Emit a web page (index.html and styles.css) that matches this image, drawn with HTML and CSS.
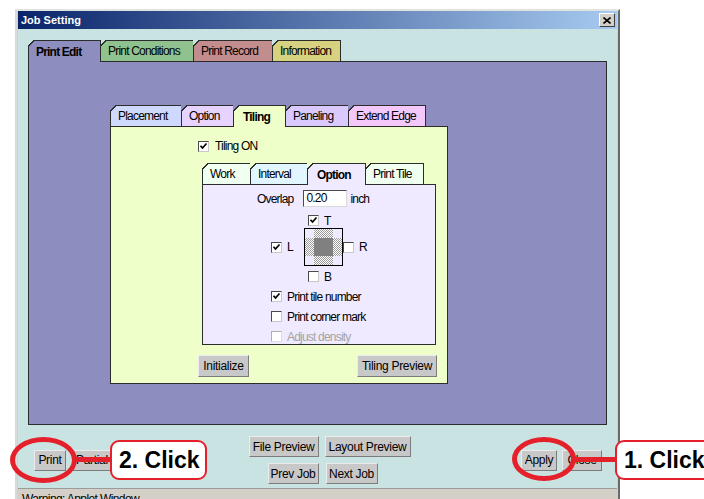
FILE: index.html
```html
<!DOCTYPE html>
<html lang="en">

<head>
    <meta charset="UTF-8">
    <title>Job Setting</title>
    <link rel="stylesheet" href="styles.css">
</head>

<body>
    <div class="window">
        <div class="titlebar">
            <span class="title">Job Setting</span>
            <span class="close-btn">
                <svg width="8" height="7" viewBox="0 0 8 7"><path d="M0.5 0.5l7 6M7.5 0.5l-7 6" stroke="#000" stroke-width="1.6"/></svg>
            </span>
        </div>

        <div class="content">
            <div class="tabs">
                <div class="tab on t-edit">Print Edit</div>
                <div class="tab t-cond">Print Conditions</div>
                <div class="tab t-rec">Print Record</div>
                <div class="tab t-info">Information</div>
            </div>

            <div class="panel main-panel">
                <div class="tabs">
                    <div class="tab t-place">Placement</div>
                    <div class="tab t-opt">Option</div>
                    <div class="tab on t-tiling">Tiling</div>
                    <div class="tab t-paneling">Paneling</div>
                    <div class="tab t-edge">Extend Edge</div>
                </div>

                <div class="panel tiling-panel">
                    <div class="check-row tiling-on"><span class="cb"><svg viewBox="0 0 9 9"><path d="M1.5 3.8l2 2.2 4-4.5" stroke="#000" stroke-width="1.7" fill="none"/></svg></span>Tiling ON</div>

                    <div class="sub-pane">
                        <div class="tabs">
                            <div class="tab t-work">Work</div>
                            <div class="tab t-interval">Interval</div>
                            <div class="tab on t-suboption">Option</div>
                            <div class="tab t-printtile">Print Tile</div>
                        </div>

                        <div class="panel option-panel">
                            <div class="overlap-row">
                                <span>Overlap</span>
                                <span class="field">0.20</span>
                                <span class="unit">inch</span>
                            </div>

                            <div class="check-row edge-tb"><span class="cb"><svg viewBox="0 0 9 9"><path d="M1.5 3.8l2 2.2 4-4.5" stroke="#000" stroke-width="1.7" fill="none"/></svg></span>T</div>

                            <div class="edge-mid">
                                <div class="check-row edge-l"><span class="cb"><svg viewBox="0 0 9 9"><path d="M1.5 3.8l2 2.2 4-4.5" stroke="#000" stroke-width="1.7" fill="none"/></svg></span>L</div>
                                <svg class="edge-box" width="39" height="38" viewBox="0 0 39 38">
                                    <defs>
                                        <pattern id="chk" width="2" height="2" patternUnits="userSpaceOnUse">
                                            <rect width="2" height="2" fill="#fff"/>
                                            <rect width="1" height="1" fill="#9a9a9a"/>
                                            <rect x="1" y="1" width="1" height="1" fill="#9a9a9a"/>
                                        </pattern>
                                    </defs>
                                    <rect x="0.5" y="0.5" width="38" height="37" fill="#efeaff" stroke="#000"/>
                                    <rect x="10" y="1" width="19" height="36" fill="url(#chk)"/>
                                    <rect x="1" y="10" width="37" height="18" fill="url(#chk)"/>
                                    <rect x="10" y="10" width="19" height="18" fill="#808080"/>
                                </svg>
                                <div class="check-row"><span class="cb"></span>R</div>
                            </div>

                            <div class="check-row edge-tb edge-b"><span class="cb"></span>B</div>

                            <div class="opt-list">
                                <div class="check-row"><span class="cb"><svg viewBox="0 0 9 9"><path d="M1.5 3.8l2 2.2 4-4.5" stroke="#000" stroke-width="1.7" fill="none"/></svg></span>Print tile number</div>
                                <div class="check-row"><span class="cb"></span>Print corner mark</div>
                                <div class="check-row disabled"><span class="cb"></span>Adjust density</div>
                            </div>
                        </div>
                    </div>

                    <div class="pane-buttons">
                        <button class="btn b-init">Initialize</button>
                        <button class="btn b-tprev">Tiling Preview</button>
                    </div>
                </div>
            </div>

            <div class="actions">
                <div class="group">
                    <button class="btn b-print">Print</button>
                    <button class="btn b-partial">Partial Print</button>
                </div>
                <div class="stack">
                    <div class="group">
                        <button class="btn b-fprev">File Preview</button>
                        <button class="btn b-lprev">Layout Preview</button>
                    </div>
                    <div class="group jobs">
                        <button class="btn b-prev">Prev Job</button>
                        <button class="btn b-next">Next Job</button>
                    </div>
                </div>
                <div class="group end">
                    <button class="btn b-apply">Apply</button>
                    <button class="btn b-close">Close</button>
                </div>
            </div>
        </div>

        <div class="status">Warning: Applet Window</div>
    </div>

    <!-- instruction marks over the window -->
    <div class="ring ring-print"></div>
    <div class="leader leader-print"></div>
    <div class="callout callout-print">2. Click</div>

    <div class="ring ring-apply"></div>
    <div class="leader leader-apply"></div>
    <div class="callout callout-apply">1. Click</div>
</body>

</html>
```

FILE: styles.css
```css
body {
    margin: 0;
    height: 499px;
    overflow: hidden;
    position: relative;
    background-color: #fff;
    font-family: "Liberation Sans", Arial, sans-serif;
    font-size: 12px;
    letter-spacing: -0.8px;
    color: #000;
}

.window {
    margin: 9px 0 0 15px;
    width: 605px;
    box-sizing: border-box;
    border: 2px solid;
    border-color: #e2e2e2 #6a6a6a #6a6a6a #dadada;
    border-bottom: 0;
    padding: 0 1px;
    background-color: #d4d0c8;
}

.titlebar {
    height: 18px;
    display: flex;
    align-items: center;
    justify-content: space-between;
    padding: 0 2px 0 3px;
    background: linear-gradient(to right, #0a246a, #a6caf0);
    color: #fff;
    font: bold 11px "Liberation Sans", Arial, sans-serif;
    letter-spacing: 0;
}

.close-btn {
    width: 16px;
    height: 14px;
    box-sizing: border-box;
    display: flex;
    align-items: center;
    justify-content: center;
    background-color: #d4d0c8;
    border: 1px solid;
    border-color: #fff #404040 #404040 #fff;
}

.content {
    background-color: #c9e3e2;
    padding: 11px 10px 0 10px;
}

/* tabs */
.tabs {
    display: flex;
    align-items: flex-end;
    height: 21px;
}

.tab {
    height: 21px;
    box-sizing: border-box;
    border: 1px solid #2c2c2c;
    border-bottom: 0;
    margin-right: -1px;
    padding: 0 0 0 7px;
    display: flex;
    align-items: center;
    position: relative;
    background-color: var(--c);
    white-space: nowrap;
}

.tab::before {
    content: "";
    position: absolute;
    top: -1px;
    left: -1px;
    width: 6px;
    height: 6px;
    background: linear-gradient(135deg, var(--under) 48%, #2c2c2c 48%, #2c2c2c 62%, transparent 62%);
}

.tab.on {
    height: 22px;
    margin-bottom: -1px;
    z-index: 1;
    font-weight: bold;
}

.panel {
    border: 1px solid #2c2c2c;
    box-sizing: border-box;
}

/* main tabs */
.t-edit { --c: #8d8ebf; --under: #c9e3e2; width: 73px; }
.t-cond { --c: #8fc28f; --under: #c9e3e2; width: 94px; }
.t-rec { --c: #c48d8d; --under: #c9e3e2; width: 80px; }
.t-info { --c: #d7d27f; --under: #c9e3e2; width: 69px; }

.main-panel {
    height: 364px;
    background-color: #8d8ebf;
    padding: 43px 0 0 81px;
}

/* placement / option / tiling ... */
.main-panel .tab { --under: #8d8ebf; }
.t-place { --c: #cfd9ff; width: 72px; }
.t-opt { --c: #e6d3ff; width: 53px; }
.t-tiling { --c: #efffca; width: 53px; padding-left: 9px; }
.t-paneling { --c: #d9c9ff; width: 64px; }
.t-edge { --c: #f4c8fb; width: 78px; }

.tiling-panel {
    width: 338px;
    height: 258px;
    background-color: #efffca;
    padding: 13px 10px 0 87px;
}

.check-row {
    display: flex;
    align-items: center;
    gap: 5px;
    height: 11px;
    white-space: nowrap;
}

.cb {
    width: 11px;
    height: 11px;
    box-sizing: border-box;
    border: 1px solid;
    border-color: #4a4a4a #c8c8c8 #c8c8c8 #4a4a4a;
    background-color: #fff;
    display: flex;
    align-items: center;
    justify-content: center;
    flex-shrink: 0;
}

.cb svg {
    width: 9px;
    height: 9px;
}

.tiling-on {
    height: 12px;
    gap: 6px;
}

.sub-pane {
    margin: 11px 0 0 4px;
    width: 234px;
}

/* work / interval / option / print tile */
.sub-pane .tab { --under: #efffca; }
.t-work { --c: #effff0; width: 49px; }
.t-interval { --c: #e2f6ff; width: 58px; }
.t-suboption { --c: #efeaff; width: 59px; padding-left: 9px; }
.t-printtile { --c: #effff0; width: 59px; }

.option-panel {
    height: 161px;
    background-color: #efeaff;
    padding-top: 5px;
}

.overlap-row {
    display: flex;
    align-items: center;
    height: 17px;
    padding-left: 54px;
}

.field {
    width: 44px;
    height: 17px;
    box-sizing: border-box;
    margin-left: 10px;
    padding-left: 2px;
    border: 1px solid;
    border-color: #4a4a4a #d8d8d8 #d8d8d8 #4a4a4a;
    background-color: #fff;
    line-height: 15px;
}

.unit {
    margin-left: 3px;
}

.edge-tb {
    margin-top: 8px;
    padding-left: 105px;
}

.edge-b {
    margin-top: 5px;
}

.edge-mid {
    display: flex;
    align-items: center;
    margin-top: 2px;
    padding-left: 68px;
}

.edge-l {
    width: 33px;
}

.edge-box {
    display: block;
}

.opt-list {
    display: flex;
    flex-direction: column;
    gap: 9px;
    margin-top: 9px;
    padding-left: 68px;
}

.check-row.disabled {
    color: #a4a4a4;
}

.check-row.disabled .cb {
    border-color: #b0b0b0 #dedede #dedede #b0b0b0;
}

.pane-buttons {
    display: flex;
    justify-content: space-between;
    margin-top: 10px;
}

/* buttons */
.btn {
    height: 21px;
    box-sizing: border-box;
    padding: 0;
    font: 12px "Liberation Sans", Arial, sans-serif;
    letter-spacing: -0.3px;
    color: #000;
    background-color: #c8c8c8;
    border: 1px solid;
    border-color: #ececec #7c7c7c #7c7c7c #ececec;
}

.pane-buttons .btn {
    height: 22px;
}

.b-init { width: 51px; }
.b-tprev { width: 80px; }
.b-print { width: 32px; }
.b-partial { width: 66px; }
.b-fprev { width: 70px; }
.b-lprev { width: 86px; }
.b-prev { width: 51px; }
.b-next { width: 52px; }
.b-apply { width: 36px; }
.b-close { width: 40px; }

.actions {
    display: flex;
    justify-content: space-between;
    align-items: center;
    padding: 11px 5px 4px 6px;
}

.group {
    display: flex;
    gap: 6px;
}

.group.end {
    gap: 5px;
}

.stack {
    display: flex;
    flex-direction: column;
    align-items: center;
    gap: 6px;
}

.group.jobs {
    gap: 7px;
    margin-left: -14px;
}

.status {
    height: 30px;
    border-top: 1px solid #9a9a9a;
    padding: 3px 0 0 4px;
    background-color: #d4d0c8;
    letter-spacing: -0.6px;
}

/* red instruction marks */
.ring {
    position: absolute;
    box-sizing: border-box;
    border: 5px solid #e4202a;
    border-radius: 50%;
}

.ring-print {
    left: 10px;
    top: 437px;
    width: 67px;
    height: 46px;
}

.ring-apply {
    left: 512px;
    top: 437px;
    width: 64px;
    height: 44px;
}

.leader {
    position: absolute;
    top: 457px;
    height: 5px;
    background-color: #e4202a;
}

.leader-print {
    left: 75px;
    width: 37px;
}

.leader-apply {
    left: 574px;
    width: 42px;
}

.callout {
    position: absolute;
    top: 440px;
    height: 40px;
    box-sizing: border-box;
    border: 2px solid #e4202a;
    border-radius: 9px;
    background-color: #fff;
    font: bold 23px "Liberation Sans", Arial, sans-serif;
    letter-spacing: 0;
    line-height: 36px;
    padding-left: 7px;
    white-space: nowrap;
}

.callout-print {
    left: 110px;
    width: 97px;
}

.callout-apply {
    left: 615px;
    width: 100px;
}
```
